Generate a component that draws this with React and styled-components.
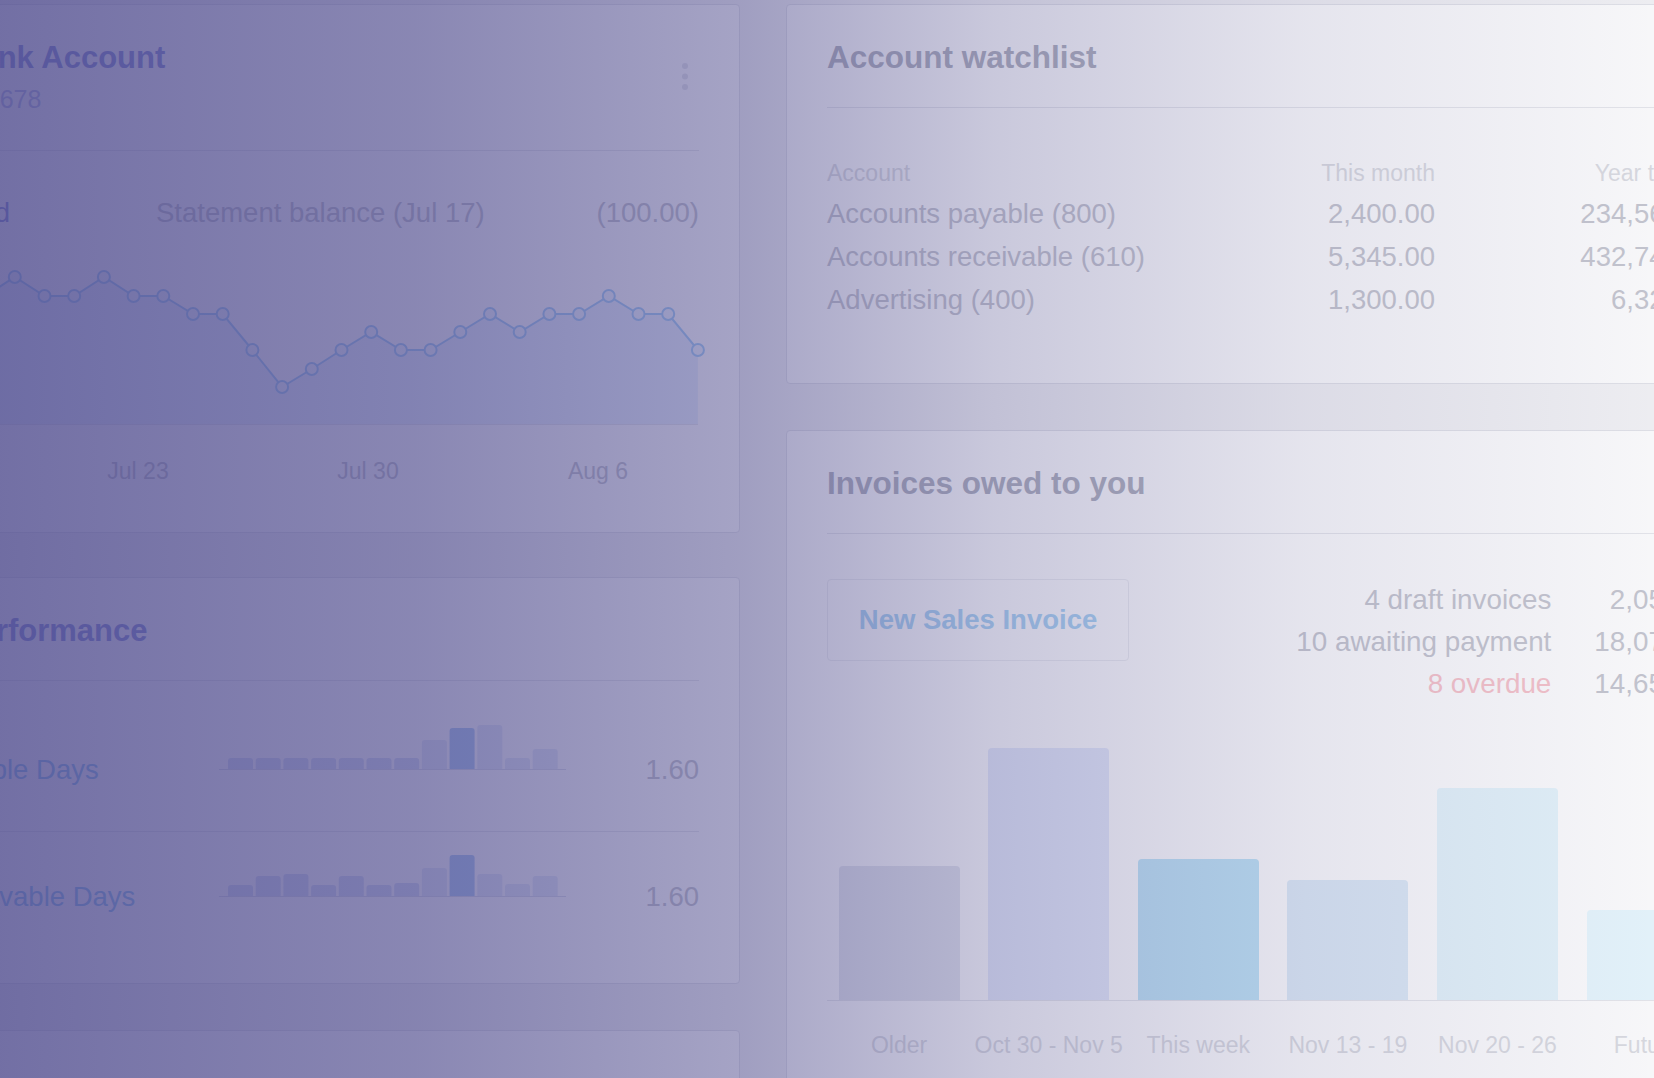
import React from 'react';
import styled, { createGlobalStyle } from 'styled-components';

// Faded dashboard behind a purple wash. The left column is cut off by the
// viewport, the right column runs past the right edge.

const PAGE = '#ededf1';
const CARD = '#f7f7f9';
const BORDER = '#dddee5';
const RULE = '#e1e2e8';
const TITLE = '#aeb0bd';
const TITLE_BLUE = '#8d95d8';
const TEXT = '#c2c3cd';
const MUTED = '#d6d7de';
const LINK = '#93c4ee';
const BUTTON_TEXT = '#a9d0ef';
const RED = '#f1c0c8';

const GlobalStyle = createGlobalStyle`
  html, body {
    margin: 0;
    padding: 0;
  }
  body {
    background: ${PAGE};
    font-family: "Liberation Sans", "Helvetica Neue", Arial, sans-serif;
    overflow: hidden;
  }
`;

const Screen = styled.div`
  position: relative;
  width: 1654px;
  height: 1078px;
  overflow: hidden;
  background: ${PAGE};
`;

const Tint = styled.div`
  position: absolute;
  inset: 0;
  pointer-events: none;
  background: linear-gradient(
    90deg,
    rgba(70, 66, 136, 0.75) 0%,
    rgba(70, 66, 136, 0.62) 25%,
    rgba(70, 66, 136, 0.46) 45%,
    rgba(70, 66, 136, 0.26) 60%,
    rgba(70, 66, 136, 0.1) 79%,
    rgba(70, 66, 136, 0) 100%
  );
`;

const Board = styled.div`
  display: grid;
  grid-template-columns: 852px 973px;
  column-gap: 46px;
  align-items: start;
  margin-left: -112px;
  padding-top: 4px;
`;

const Column = styled.div`
  display: flex;
  flex-direction: column;
  gap: ${p => p.$gap}px;
`;

const Card = styled.section`
  background: ${CARD};
  border: 1px solid ${BORDER};
  border-radius: 4px;
  padding: 0 40px ${p => p.$bottom || 0}px;
  margin-top: ${p => p.$offset || 0}px;
  min-height: ${p => p.$minHeight || 0}px;
`;

const CardHeader = styled.header`
  display: flex;
  align-items: flex-start;
  justify-content: space-between;
  padding: 34px 0 31px ${p => p.$indent || 0}px;
  border-bottom: 1px solid ${RULE};
`;

const Title = styled.h2`
  margin: 0;
  font-size: ${p => (p.$blue ? 31 : 31.5)}px;
  line-height: 37px;
  font-weight: 700;
  color: ${p => (p.$blue ? TITLE_BLUE : TITLE)};
`;

const SubTitle = styled.div`
  margin: 6px 0 3px;
  font-size: 25px;
  line-height: 34px;
  color: #b7bde6;
`;

const Kebab = styled.svg`
  margin: 21px 8px 0 0;
  flex: none;
`;

const BalanceRow = styled.div`
  display: grid;
  grid-template-columns: 227px 1fr auto;
  margin-top: 45px;
  font-size: 27.5px;
  line-height: 33px;
  color: ${TEXT};
`;

const Strong = styled.span`
  color: ${TITLE_BLUE};
`;

const ChartSvg = styled.svg`
  display: block;
  margin-top: 21px;
  overflow: visible;
  font-family: "Liberation Sans", "Helvetica Neue", Arial, sans-serif;
`;

const RowList = styled.div`
  padding: 24px 0 25px;
`;

const PerfRow = styled.div`
  display: grid;
  grid-template-columns: 290px 347px 1fr;
  align-items: end;
  padding: 15px 0 45px;
  border-bottom: 1px solid ${RULE};
  font-size: 27.5px;
  line-height: 33px;

  &:last-child {
    border-bottom: 0;
  }
`;

const PerfLabel = styled.span`
  color: ${LINK};
  white-space: nowrap;
`;

const PerfValue = styled.span`
  text-align: right;
  color: ${TEXT};
`;

const Spark = styled.svg`
  display: block;
  margin-bottom: 16px;
`;

const WatchTable = styled.div`
  display: grid;
  grid-template-columns: 1fr 200px 283px;
  margin-top: 51px;
  padding-bottom: 62px;
`;

const HeadCell = styled.div`
  font-size: 23px;
  line-height: 28px;
  padding-bottom: 5px;
  color: ${MUTED};
  text-align: ${p => (p.$right ? 'right' : 'left')};
`;

const Cell = styled.div`
  font-size: 27.5px;
  line-height: 43px;
  color: ${TEXT};
  white-space: nowrap;
  text-align: ${p => (p.$right ? 'right' : 'left')};
`;

const InvoiceTop = styled.div`
  display: flex;
  justify-content: space-between;
  align-items: flex-start;
  margin-top: 45px;
`;

const Button = styled.button`
  width: 302px;
  height: 82px;
  background: ${CARD};
  border: 1px solid #e7e8ed;
  border-radius: 4px;
  font-family: inherit;
  font-size: 27.5px;
  font-weight: 700;
  color: ${BUTTON_TEXT};
  cursor: pointer;
`;

const Stats = styled.div`
  display: grid;
  grid-template-columns: auto auto;
  column-gap: 43px;
  font-size: 27.8px;
  line-height: 42px;
`;

const StatLabel = styled.span`
  text-align: right;
  color: ${p => (p.$alert ? RED : TEXT)};
`;

const StatValue = styled.span`
  text-align: right;
  color: ${TEXT};
`;

const BarRow = styled.div`
  display: flex;
  align-items: flex-end;
  gap: 28.6px;
  padding-left: 11.6px;
  height: 260px;
  margin-top: 35px;
`;

const Bar = styled.div`
  flex: none;
  width: 121px;
  border-radius: 4px 4px 0 0;
  background: ${p => p.$color};
`;

const AxisRow = styled.div`
  display: flex;
  gap: 28.6px;
  padding: 30px 0 0 11.6px;
  border-top: 1px solid ${RULE};
`;

const AxisLabel = styled.span`
  flex: none;
  width: 121px;
  display: flex;
  justify-content: center;
  font-size: 23px;
  line-height: 28px;
  color: ${MUTED};
  white-space: nowrap;
`;

// line chart, y levels in page px, chart svg starts at y=250
const LEVELS = [277, 296, 314, 332, 350, 369, 387];
const CHART_TOP = 250;
const LINE = [2, 2, 1, 0, 1, 1, 0, 1, 1, 2, 2, 4, 6, 5, 4, 3, 4, 4, 3, 2, 3, 2, 2, 1, 2, 2, 4];
const FIRST_X = 85.8 - 3 * 29.7;

const BalanceChart = () => {
  const pts = LINE.map((lv, i) => [FIRST_X + i * 29.7, LEVELS[lv] - CHART_TOP]);
  const line = pts.map(([x, y], i) => `${i ? 'L' : 'M'}${x.toFixed(1)} ${y}`).join(' ');
  const last = pts[pts.length - 1];
  const area = `${line} L${last[0].toFixed(1)} 174 L${pts[0][0].toFixed(1)} 174 Z`;
  return (
    <ChartSvg width="769" height="235" viewBox="0 0 769 235">
      <path d={area} fill="#e4ebf8" />
      <line x1="0" y1="174.5" x2="769" y2="174.5" stroke={RULE} strokeWidth="1" />
      <path d={line} fill="none" stroke="#a4ccf2" strokeWidth="2" />
      {pts.map(([x, y], i) => (
        <circle key={i} cx={x} cy={y} r="6" fill="#eaf0f9" stroke="#a4ccf2" strokeWidth="2" />
      ))}
      <g fontSize="23" fill={TEXT} textAnchor="middle">
        <text x="209" y="229">Jul 23</text>
        <text x="439" y="229">Jul 30</text>
        <text x="669" y="229">Aug 6</text>
      </g>
    </ChartSvg>
  );
};

const SPARK_TONES = { mid: '#d3daf0', dark: '#adc8ee', light: '#e0e5f3' };

const SparkBars = ({ heights, tones }) => (
  <Spark width="347" height="50" viewBox="0 0 347 50">
    {heights.map((h, i) => (
      <rect
        key={i}
        x={9 + i * 27.7}
        y={49 - h}
        width="25"
        height={h + 2}
        rx="3"
        fill={SPARK_TONES[tones[i]]}
      />
    ))}
    <rect x="0" y="49" width="347" height="1" fill="#d6d9e6" />
  </Spark>
);

const TONES = ['mid', 'mid', 'mid', 'mid', 'mid', 'mid', 'mid', 'light', 'dark', 'light', 'light', 'light'];

const performance = [
  { label: 'Payable Days', value: '1.60', heights: [11, 11, 11, 11, 11, 11, 11, 29, 41, 44, 11, 20] },
  { label: 'Receivable Days', value: '1.60', heights: [11, 20, 22, 11, 20, 11, 13, 28, 41, 22, 12, 20] },
];

const watchlist = [
  ['Accounts payable (800)', '2,400.00', '234,567.00'],
  ['Accounts receivable (610)', '5,345.00', '432,745.00'],
  ['Advertising (400)', '1,300.00', '6,320.00'],
];

const invoiceStats = [
  { label: '4 draft invoices', value: '2,050.00' },
  { label: '10 awaiting payment', value: '18,075.00' },
  { label: '8 overdue', value: '14,650.00', alert: true },
];

const invoiceBars = [
  { label: 'Older', height: 134, color: '#dfe1ea' },
  { label: 'Oct 30 - Nov 5', height: 252, color: '#e0e5f6' },
  { label: 'This week', height: 141, color: '#bcdff2' },
  { label: 'Nov 13 - 19', height: 120, color: '#d9e6f3' },
  { label: 'Nov 20 - 26', height: 212, color: '#e0eff7' },
  { label: 'Future', height: 90, color: '#e2f1f9' },
];

const App = () => (
  <Screen>
    <GlobalStyle />
    <Board>
      <Column $gap={44}>
        <Card $bottom={47}>
          <CardHeader $indent={29}>
            <div>
              <Title $blue>Bank Account</Title>
              <SubTitle>345678</SubTitle>
            </div>
            <Kebab width="12" height="32" viewBox="0 0 12 32">
              <circle cx="6" cy="6" r="3" fill="#dfe0e7" />
              <circle cx="6" cy="16.5" r="3" fill="#dfe0e7" />
              <circle cx="6" cy="27" r="3" fill="#dfe0e7" />
            </Kebab>
          </CardHeader>
          <BalanceRow>
            <Strong>Linked</Strong>
            <span>Statement balance (Jul 17)</span>
            <span>(100.00)</span>
          </BalanceRow>
          <BalanceChart />
        </Card>

        <Card>
          <CardHeader $indent={29}>
            <Title $blue>Performance</Title>
          </CardHeader>
          <RowList>
            {performance.map(row => (
              <PerfRow key={row.label}>
                <PerfLabel>{row.label}</PerfLabel>
                <SparkBars heights={row.heights} tones={TONES} />
                <PerfValue>{row.value}</PerfValue>
              </PerfRow>
            ))}
          </RowList>
        </Card>

        <Card $minHeight={300} $offset={2} />
      </Column>

      <Column $gap={46}>
        <Card>
          <CardHeader>
            <Title>Account watchlist</Title>
          </CardHeader>
          <WatchTable>
            <HeadCell>Account</HeadCell>
            <HeadCell $right>This month</HeadCell>
            <HeadCell $right>Year to date</HeadCell>
            {watchlist.map(([name, month, year]) => (
              <React.Fragment key={name}>
                <Cell>{name}</Cell>
                <Cell $right>{month}</Cell>
                <Cell $right>{year}</Cell>
              </React.Fragment>
            ))}
          </WatchTable>
        </Card>

        <Card $minHeight={700}>
          <CardHeader>
            <Title>Invoices owed to you</Title>
          </CardHeader>
          <InvoiceTop>
            <Button>New Sales Invoice</Button>
            <Stats>
              {invoiceStats.map(s => (
                <React.Fragment key={s.label}>
                  <StatLabel $alert={s.alert}>{s.label}</StatLabel>
                  <StatValue>{s.value}</StatValue>
                </React.Fragment>
              ))}
            </Stats>
          </InvoiceTop>
          <BarRow>
            {invoiceBars.map(b => (
              <Bar key={b.label} $color={b.color} style={{ height: b.height }} />
            ))}
          </BarRow>
          <AxisRow>
            {invoiceBars.map(b => (
              <AxisLabel key={b.label}>{b.label}</AxisLabel>
            ))}
          </AxisRow>
        </Card>
      </Column>
    </Board>
    <Tint />
  </Screen>
);

export default App;
